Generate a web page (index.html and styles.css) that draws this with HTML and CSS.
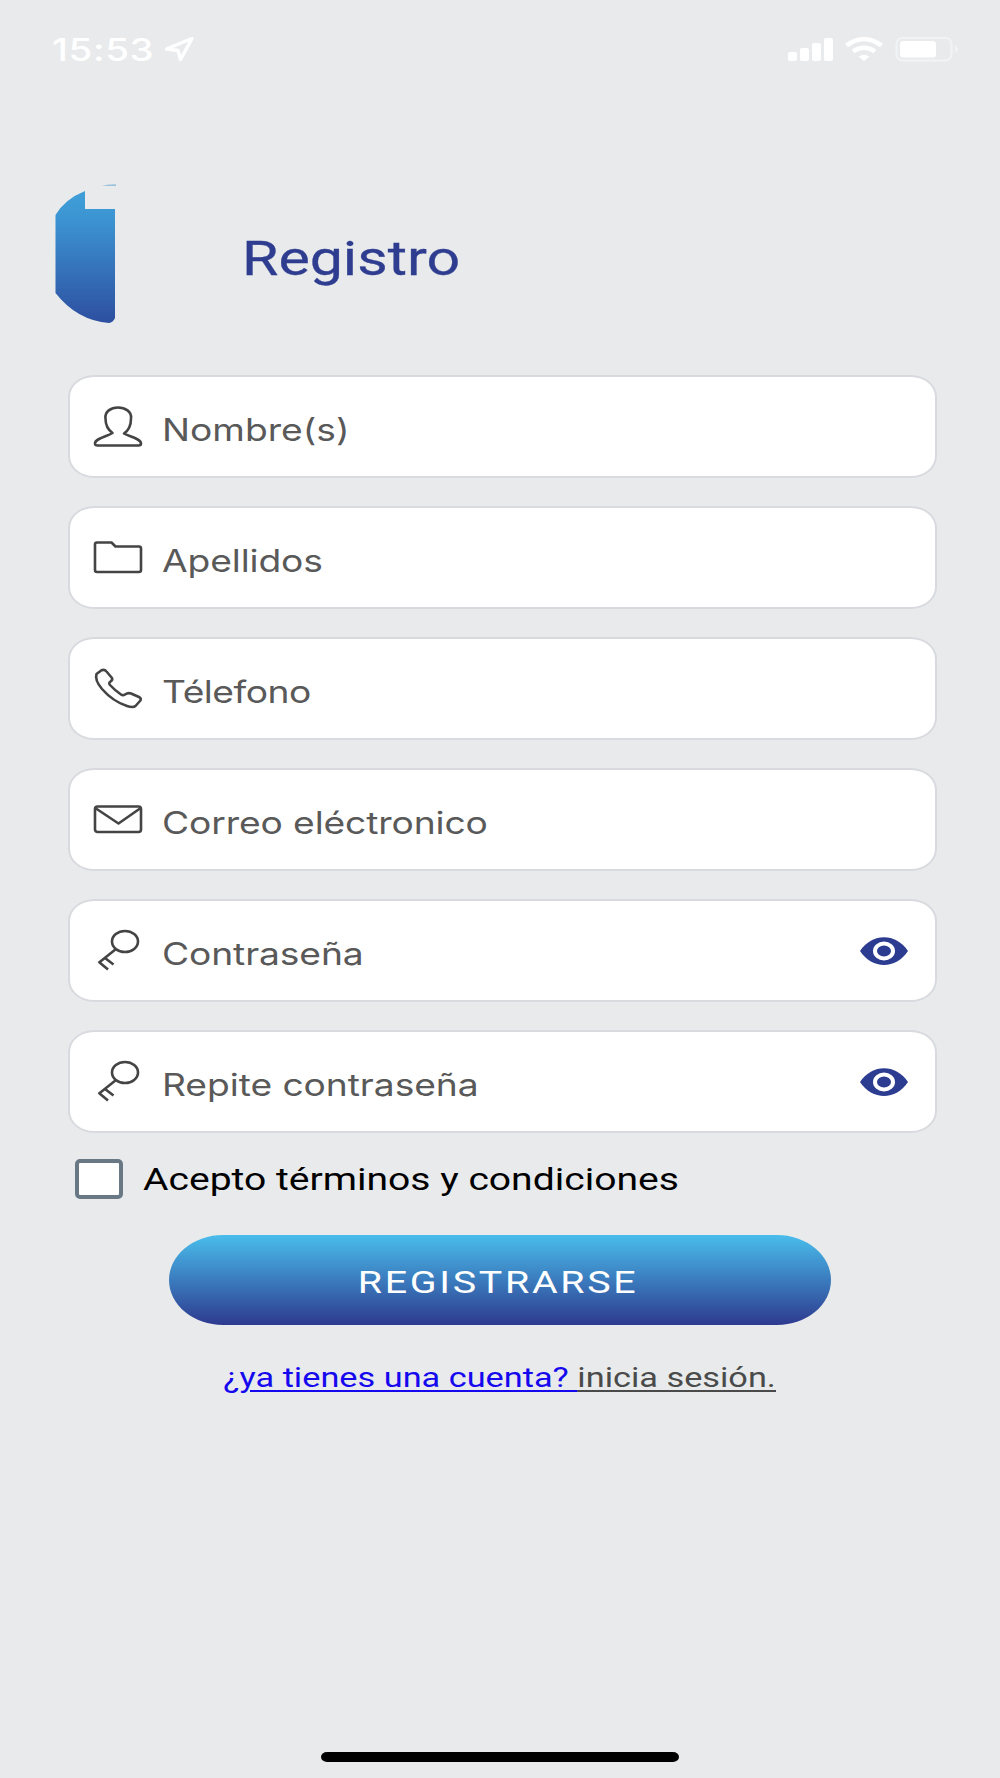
FILE: index.html
```html
<!DOCTYPE html>
<html lang="es">
     <head>
          <meta charset="UTF-8" />
          <meta
               name="viewport"
               content="width=device-width, initial-scale=1.0" />
          <title>Registro</title>
          <link rel="stylesheet" href="styles.css">
     </head>
     <body>
          <div class="status">
               <span class="time">15:53</span>
               <svg class="arrow" viewBox="0 0 32 26"><path d="M29 2.500 L3.500 13 L15 14.500 L17.500 23.500 Z" /></svg>
               <svg class="signals" viewBox="0 0 174 26">
                    <rect x="0" y="16" width="9" height="9" rx="2" />
                    <rect x="12" y="12" width="9" height="13" rx="2" />
                    <rect x="24" y="7" width="9" height="18" rx="2" />
                    <rect x="36" y="2" width="9" height="23" rx="2" />
                    <g class="wifi">
                         <path d="M58.500 9.500 Q76 -3.500 93.500 9.500" />
                         <path d="M65 15.500 Q76 8 87 15.500" />
                    </g>
                    <path d="M70.500 20.500 Q76 17 81.500 20.500 L76 25 Z" />
                    <rect class="battery" x="108.500" y="2" width="55" height="22.500" rx="6" />
                    <rect x="112" y="5" width="36" height="16.500" rx="3" />
                    <path class="nub" d="M167 9 Q173 13 167 17 Z" />
               </svg>
          </div>

          <header>
               <svg class="logo" viewBox="0 0 62 140">
                    <defs>
                         <linearGradient id="blue" x1="0" y1="0" x2="0" y2="1">
                              <stop offset="0" stop-color="#3f9fd8" />
                              <stop offset="0.200" stop-color="#3c95d2" />
                              <stop offset="1" stop-color="#2d4fa0" />
                         </linearGradient>
                    </defs>
                    <path fill="url(#blue)" d="M30 7 V25 H60 V134 Q58 138.500 54 139 Q22 136.500 0.500 109 V31 Q10 15 30 7 Z" />
                    <path fill="#7eb4d6" d="M47 1.700 Q54 0.200 61 0.500 V1.700 Z" />
               </svg>
               <h1>Registro</h1>
          </header>

          <form>
               <label class="field">
                    <svg class="icon" viewBox="0 0 48 40"><path d="M24 0.500 C31 0.500 38 4.500 37 11.500 C37 18.500 34.500 23.500 30 26.500 C34 29 47 31.500 47 36.500 Q47 38.500 44.500 38.500 H3.500 Q1 38.500 1 36.500 C1 31.500 14 29 18.500 26 C13.500 22.500 11.500 17.500 11.500 11.500 C10.500 4.500 17 0.500 24 0.500 Z" /></svg>
                    <input class="nombre" type="text" placeholder="Nombre(s)" />
               </label>
               <label class="field">
                    <svg class="icon" viewBox="0 0 48 40"><path d="M3 4.500 H17.500 L21.500 8.500 H45 Q47 8.500 47 10.500 V32 Q47 34 45 34 H3 Q1 34 1 32 V6.500 Q1 4.500 3 4.500 Z" /></svg>
                    <input class="apellidos" type="text" placeholder="Apellidos" />
               </label>
               <label class="field">
                    <svg class="icon" viewBox="0 0 48 40"><path d="M2.500 5 L7.500 1.300 Q10.500 0 12.500 2.500 L18 9 Q19 11 16 13 Q14.500 14 16 16 Q21 21.500 27 25.500 Q29 27 31 25.500 Q34 23.500 37 24.500 L45 28 Q48 29.500 46 32 L41.500 37 Q39 39 33 37 Q19 32.500 8 20 Q0.500 11 2.500 5 Z" /></svg>
                    <input class="telefono" type="text" placeholder="Télefono" />
               </label>
               <label class="field">
                    <svg class="icon" viewBox="0 0 48 40"><rect x="1" y="6.500" width="46" height="25.500" rx="2.500" /><path d="M2 8.500 L24.500 23.500 L46 8.500" /></svg>
                    <input class="correo" type="text" placeholder="Correo eléctronico" />
               </label>
               <label class="field">
                    <svg class="icon" viewBox="0 0 48 40"><ellipse cx="31" cy="10.500" rx="13" ry="10.500" /><path d="M22 18 L4.500 32 M5 31 L14 38.500 M11 27 L19.500 33.500" /></svg>
                    <input class="contra" type="text" placeholder="Contraseña" />
                    <svg class="eye" viewBox="0 0 48 28"><path d="M0 14 C12 -4.500 36 -4.500 48 14 C36 32.500 12 32.500 0 14 Z" /><ellipse cx="24" cy="14" rx="9" ry="7.500" /></svg>
               </label>
               <label class="field">
                    <svg class="icon" viewBox="0 0 48 40"><ellipse cx="31" cy="10.500" rx="13" ry="10.500" /><path d="M22 18 L4.500 32 M5 31 L14 38.500 M11 27 L19.500 33.500" /></svg>
                    <input class="repite" type="text" placeholder="Repite contraseña" />
                    <svg class="eye" viewBox="0 0 48 28"><path d="M0 14 C12 -4.500 36 -4.500 48 14 C36 32.500 12 32.500 0 14 Z" /><ellipse cx="24" cy="14" rx="9" ry="7.500" /></svg>
               </label>

               <label class="terms">
                    <input type="checkbox" />
                    <span>Acepto términos y condiciones</span>
               </label>

               <button type="button"><span>REGISTRARSE</span></button>
          </form>

          <p class="login"><a href="#">¿ya tienes una cuenta? <span>inicia sesión.</span></a></p>

          <div class="home"></div>
     </body>
</html>
```
FILE: styles.css
```css
* {
     padding: 0;
     margin: 0;
     box-sizing: border-box;
}
body {
     display: flex;
     flex-direction: column;
     height: 1778px;
     background-color: #e8eaec;
     font-family: Roboto, sans-serif;
}
svg {
     display: block;
     flex: none;
}

.status {
     display: flex;
     height: 62px;
     padding: 36px 38px 0 52px;
}
.time {
     width: 111px;
     padding-top: 1px;
     font-family: Inter, sans-serif;
     font-size: 31px;
     font-weight: 500;
     line-height: 26px;
     letter-spacing: 0.5px;
     color: white;
     transform: scaleX(1.24);
     transform-origin: left;
}
.arrow {
     width: 32px;
     height: 26px;
     fill: none;
     stroke: white;
     stroke-width: 3.5;
     stroke-linejoin: round;
}
.signals {
     width: 174px;
     height: 26px;
     margin-left: auto;
     fill: white;
}
.wifi {
     fill: none;
     stroke: white;
     stroke-width: 4.5;
}
.battery {
     fill: none;
     stroke: #f2f3f4;
     stroke-width: 2;
}
.nub {
     fill: #f2f3f4;
}

header {
     display: flex;
     margin: 122px 0 0 55px;
     height: 140px;
}
.logo {
     width: 62px;
     height: 140px;
}
h1 {
     margin: 47px 0 0 125px;
     font-size: 48px;
     font-weight: 400;
     line-height: 56px;
     color: #2e3d8f;
     -webkit-text-stroke: 0.3px #2e3d8f;
     transform: scaleX(1.23);
     transform-origin: left;
}

form {
     display: flex;
     flex-direction: column;
     margin: 51px 63px 0 68px;
}
.field {
     display: flex;
     align-items: center;
     height: 103px;
     margin-bottom: 28px;
     padding: 0 27px 0 24px;
     background-color: white;
     border: 2px solid #d9dadf;
     border-radius: 26px / 22px;
}
.icon {
     width: 48px;
     height: 40px;
     fill: none;
     stroke: #444;
     stroke-width: 2.6;
     stroke-linejoin: round;
     overflow: visible;
}
.field input {
     width: 400px;
     height: 60px;
     margin-left: 20px;
     padding-top: 6px;
     border: none;
     outline: none;
     background: none;
     font-family: Inter, sans-serif;
     font-size: 31px;
     letter-spacing: -0.1px;
     transform: scaleX(1.2);
     transform-origin: left;
}
.field .nombre {
     letter-spacing: 0;
}
.field .telefono {
     letter-spacing: -0.4px;
}
.field .repite {
     letter-spacing: -0.05px;
}
.field input::placeholder {
     color: #595959;
}
.eye {
     width: 48px;
     height: 28px;
     margin-left: auto;
     fill: #2c3c90;
}
.eye ellipse {
     stroke: white;
     stroke-width: 4;
}

.terms {
     display: flex;
     align-items: center;
     height: 40px;
     margin: -2px 0 0 7px;
}
.terms input {
     appearance: none;
     width: 48px;
     height: 40px;
     background-color: white;
     border: 4px solid #687884;
     border-radius: 5px;
}
.terms span {
     margin-left: 20px;
     font-size: 32px;
     line-height: 40px;
     color: black;
     transform: scaleX(1.221);
     transform-origin: left;
}

button {
     width: 662px;
     height: 90px;
     margin: 36px 0 0 101px;
     border: none;
     border-radius: 54px / 45px;
     background: linear-gradient(#49bdec, #2d3a8f);
     color: white;
     font-family: Roboto, sans-serif;
     font-size: 32px;
}
button span {
     display: inline-block;
     margin-right: 4px;
     padding-top: 3px;
     letter-spacing: 2.2px;
     transform: scaleX(1.23);
}

.login {
     width: fit-content;
     margin: 36px auto 0;
     font-size: 28px;
     line-height: 33px;
     transform: scaleX(1.225);
}
.login a {
     color: #1508ee;
     text-underline-offset: 3px;
     text-decoration-thickness: 2px;
}
.login span {
     color: #4a4a4a;
     text-decoration: underline;
     text-underline-offset: 3px;
     text-decoration-thickness: 2px;
}

.home {
     width: 358px;
     height: 10px;
     margin: auto auto 16px;
     border-radius: 6px / 5px;
     background-color: black;
}
```
